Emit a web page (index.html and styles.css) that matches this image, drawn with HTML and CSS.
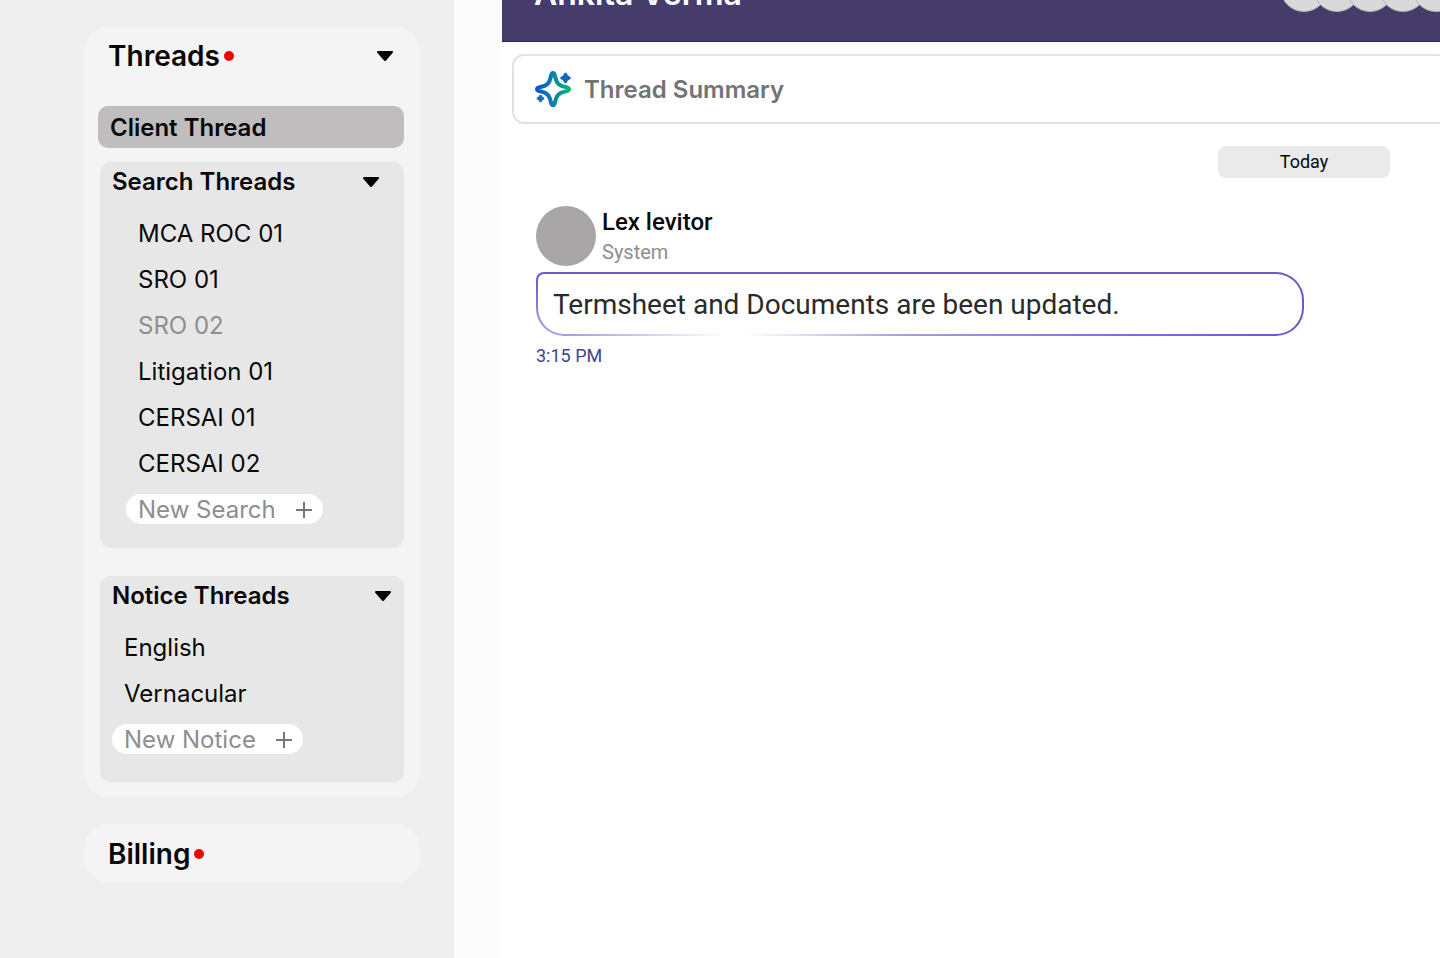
FILE: index.html
```html
<!DOCTYPE html>
<html lang="en">
<head>
    <meta charset="UTF-8">
    <meta name="viewport" content="width=device-width, initial-scale=1.0">
    <title>Threads</title>
    <link rel="stylesheet" href="styles.css">
</head>
<body>
    <div class="layout">
        <aside class="sidebar">
            <nav class="panel threads">
                <button type="button" class="panel-title">
                    <span>Threads</span><span class="dot"></span>
                    <svg class="caret" viewBox="0 0 18 12"><path d="M2 2h14L9 10z"/></svg>
                </button>

                <a href="#" class="thread-active">Client Thread</a>

                <section class="group search">
                    <button type="button" class="group-title">
                        <span>Search Threads</span>
                        <svg class="caret" viewBox="0 0 18 12"><path d="M2 2h14L9 10z"/></svg>
                    </button>
                    <ul>
                        <li><a href="#">MCA ROC 01</a></li>
                        <li><a href="#">SRO 01</a></li>
                        <li><a href="#" class="muted">SRO 02</a></li>
                        <li><a href="#">Litigation 01</a></li>
                        <li><a href="#">CERSAI 01</a></li>
                        <li><a href="#">CERSAI 02</a></li>
                    </ul>
                    <button type="button" class="new-btn">
                        New Search
                        <svg class="plus" viewBox="0 0 16 16"><path d="M8 0v16M0 8h16"/></svg>
                    </button>
                </section>

                <section class="group notice">
                    <button type="button" class="group-title">
                        <span>Notice Threads</span>
                        <svg class="caret" viewBox="0 0 18 12"><path d="M2 2h14L9 10z"/></svg>
                    </button>
                    <ul>
                        <li><a href="#">English</a></li>
                        <li><a href="#">Vernacular</a></li>
                    </ul>
                    <button type="button" class="new-btn">
                        New Notice
                        <svg class="plus" viewBox="0 0 16 16"><path d="M8 0v16M0 8h16"/></svg>
                    </button>
                </section>
            </nav>

            <div class="panel billing">
                <button type="button" class="panel-title">
                    <span>Billing</span><span class="dot"></span>
                </button>
            </div>
        </aside>

        <main class="chat">
            <header class="chat-header">
                <h1>Ankita Verma</h1>
                <div class="members">
                    <span></span><span></span><span></span><span></span><span></span>
                </div>
            </header>

            <button type="button" class="summary">
                <svg class="sparkle" viewBox="0 0 36 36">
                    <defs>
                        <linearGradient id="spark" gradientUnits="userSpaceOnUse" x1="1" y1="18" x2="35" y2="18">
                            <stop offset="0" stop-color="#0a50dc"/>
                            <stop offset="0.5" stop-color="#0b80ae"/>
                            <stop offset="1" stop-color="#08b87c"/>
                        </linearGradient>
                    </defs>
                    <path class="star" stroke="url(#spark)" d="M18 2c-1.400 0-1.700 1.500-2 3-1.400 7-3.500 9.600-10.500 11C3.500 16.400 2 16.800 2 18.200s1.500 1.800 3.500 2.200c7 1.400 9.100 4 10.500 11 .3 1.500.6 2.800 2 2.800s1.700-1.300 2-2.800c1.400-7 3.500-9.600 10.500-11 2-.4 3.500-.8 3.500-2.200s-1.500-1.800-3.500-2.200C23.500 14.600 21.400 12 20 5c-.3-1.500-.6-3-2-3z"/>
                    <path class="spark-small" fill="#1268bd" stroke="#1268bd" d="M30.500 3.200l1.300 2.500 2.500 1.300-2.500 1.300-1.300 2.500-1.300-2.500-2.500-1.300 2.500-1.300z"/>
                    <path class="spark-small" fill="#126cb8" stroke="#126cb8" d="M5.500 25.200l.8 1.500 1.500.8-1.500.8-.8 1.500-.8-1.500-1.500-.8 1.500-.8z"/>
                </svg>
                Thread Summary
            </button>

            <div class="messages">
                <div class="day">Today</div>

                <article class="message">
                    <div class="author">
                        <span class="avatar"></span>
                        <div>
                            <h2>Lex levitor</h2>
                            <p class="role">System</p>
                        </div>
                    </div>
                    <p class="bubble">Termsheet and Documents are been updated.</p>
                    <time>3:15 PM</time>
                </article>
            </div>
        </main>
    </div>
</body>
</html>
```
FILE: styles.css
```css
* {
    box-sizing: border-box;
}
body {
    margin: 0;
    font-family: Inter, "Liberation Sans", sans-serif;
    background-color: #fcfcfc;
    color: #080808;
    overflow: hidden;
}
button {
    border: 0;
    padding: 0;
    background: none;
    font: inherit;
    color: inherit;
    text-align: left;
    cursor: pointer;
}
a {
    color: inherit;
    text-decoration: none;
}
h1, h2, p, ul {
    margin: 0;
    padding: 0;
}
ul {
    list-style: none;
}

.layout {
    display: grid;
    grid-template-columns: 454px minmax(0, 1fr);
    column-gap: 48px;
    min-height: 100vh;
}

/* sidebar */
.sidebar {
    padding: 27px 34px 27px 84px;
    background-color: #efefef;
}
.panel {
    border-radius: 24px;
    background-color: #f4f4f4;
}
.threads {
    padding: 9px 16px 15px 14px;
}
.billing {
    margin-top: 27px;
    padding: 10px 16px 8px 14px;
}
.panel-title {
    display: flex;
    align-items: center;
    width: 100%;
    padding: 0 10px;
    font-size: 28px;
    font-weight: 600;
    line-height: 40px;
}
.dot {
    width: 10px;
    height: 10px;
    margin-left: 4px;
    border-radius: 50%;
    background-color: #ee0505;
}
.caret {
    width: 18px;
    height: 12px;
    margin-left: auto;
    fill: #000;
    stroke: #000;
    stroke-width: 2;
    stroke-linejoin: round;
}
.thread-active {
    display: block;
    margin-top: 30px;
    padding: 1px 12px 0;
    border-radius: 10px;
    background-color: #bfbdbe;
    font-size: 24px;
    font-weight: 600;
    line-height: 41px;
}
.group {
    margin: 14px 0 0 2px;
    padding: 0 12px 24px;
    border-radius: 10px;
    background-color: #e7e7e7;
    font-size: 24px;
}
.group-title {
    display: flex;
    align-items: center;
    width: 100%;
    margin-bottom: 10px;
    font-weight: 600;
    line-height: 39px;
}
.group li {
    padding-left: 12px;
    line-height: 46px;
}
.muted {
    color: #8e8e8e;
}
.new-btn {
    display: flex;
    align-items: center;
    gap: 20px;
    margin-top: 7px;
    padding: 1px 11px 0 12px;
    border-radius: 15px;
    background-color: #fff;
    color: #8e8e8e;
    line-height: 29px;
}
.plus {
    width: 16px;
    height: 16px;
    stroke: #777;
    stroke-width: 2;
}
.search ul, .search .new-btn {
    margin-left: 14px;
}
.search .caret {
    margin-right: 12px;
}
.notice {
    margin-top: 28px;
    padding-bottom: 28px;
}

/* chat */
.chat {
    overflow: hidden;
    background-color: #fff;
}
.chat-header {
    display: flex;
    align-items: center;
    justify-content: space-between;
    height: 96px;
    margin-top: -54px;
    padding-left: 32px;
    border-bottom: 1px solid #30285a;
    background-color: #463c6b;
    color: #fff;
}
.chat-header h1 {
    font-size: 32px;
    font-weight: 600;
    line-height: 40px;
}
/* reversed so the leftmost circle sits on top */
.members {
    display: flex;
    flex-direction: row-reverse;
    margin-right: -20px;
    padding-bottom: 11px;
}
.members span {
    width: 48px;
    height: 48px;
    margin-left: -15px;
    border: 1px solid #b5b3b0;
    border-radius: 50%;
    background-color: #d9d9d9;
}
.summary {
    display: flex;
    align-items: center;
    gap: 13px;
    width: 100%;
    height: 70px;
    margin: 12px 0 0 10px;
    padding-left: 21px;
    border: 2px solid #e2e2e2;
    border-radius: 12px;
    color: #737373;
    font-size: 24px;
    font-weight: 600;
}
.sparkle {
    width: 36px;
    height: 36px;
    overflow: visible;
}
.star {
    fill: none;
    stroke-width: 4;
    stroke-linejoin: round;
}
.spark-small {
    stroke-width: 3;
    stroke-linejoin: round;
}
.messages {
    padding: 22px 50px 0 34px;
    font-family: Roboto, "Liberation Sans", sans-serif;
}
.day {
    width: 172px;
    margin-left: auto;
    border-radius: 8px;
    background-color: #eaeaea;
    font-size: 18px;
    line-height: 32px;
    text-align: center;
}
.message {
    max-width: 768px;
    margin-top: 28px;
}
.author {
    display: flex;
    align-items: center;
    gap: 6px;
}
.avatar {
    width: 60px;
    height: 60px;
    border-radius: 50%;
    background-color: #a8a6a7;
}
.author h2 {
    font-size: 24px;
    font-weight: 500;
    line-height: 32px;
}
.role {
    color: #8e8e8e;
    font-size: 20px;
    line-height: 28px;
}
.bubble {
    margin-top: 6px;
    padding: 1px 15px 0;
    border: 2px solid transparent;
    border-radius: 8px 28px 28px 28px;
    background: linear-gradient(#fff, #fff) padding-box,
        radial-gradient(560px 64px at 26% 100%, #fff 2%, #a79de2 30%, #7b70da 70%, #675ccc) border-box;
    color: #2b2b2b;
    font-size: 28px;
    line-height: 59px;
}
.message time {
    display: block;
    margin-top: 8px;
    color: #3b4690;
    font-size: 18px;
    line-height: 24px;
}
```
